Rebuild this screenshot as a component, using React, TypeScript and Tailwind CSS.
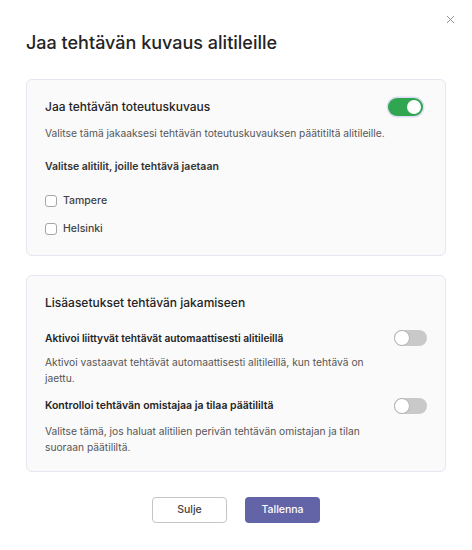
import React from "react";

function Toggle({ on }: { on: boolean }) {
  if (on) {
    return (
      <div className="flex h-[18px] w-[35px] items-center justify-end rounded-full bg-[#2fa64f] pr-[2px] shadow-[0_0_0_1.5px_#dcdcf4]">
        <div className="h-[14px] w-[14px] rounded-full bg-white" />
      </div>
    );
  }
  return (
    <div className="flex h-[16px] w-[33px] items-center rounded-full bg-[#c9c9c9]">
      <div className="h-[16px] w-[16px] rounded-full border border-[#b4b4b4] bg-white" />
    </div>
  );
}

function Checkbox({ label }: { label: string }) {
  return (
    <label className="flex items-center gap-[6px]">
      <span className="h-[12px] w-[12px] rounded-[3px] border border-[#a6a6a6] bg-white" />
      <span className="text-[10.5px] leading-[16px] font-medium text-[#424242]">{label}</span>
    </label>
  );
}

export default function App() {
  return (
    <div
      className="relative h-[550px] w-[472px] bg-white px-[26px] text-[#242424]"
      style={{ fontFamily: "Inter, 'Noto Sans', sans-serif" }}
    >
      {/* close button */}
      <button className="absolute right-[17px] top-[15px] text-[#8a8a8a]" aria-label="Sulje">
        <svg width="9" height="9" viewBox="0 0 10 10" fill="none" stroke="currentColor" strokeWidth="1">
          <path d="M1 1l8 8M9 1l-8 8" />
        </svg>
      </button>

      <h1 className="pt-[31px] text-[18px] leading-[24px] font-medium text-[#242424]">
        Jaa tehtävän kuvaus alitileille
      </h1>

      {/* Main share card */}
      <div className="mt-[24px] rounded-[6px] border border-[#e6e6f0] bg-[#fafafb] px-[18px] pt-[17px] pb-[18px]">
        <div className="flex items-center justify-between">
          <div className="text-[12px] leading-[20px] font-medium">Jaa tehtävän toteutuskuvaus</div>
          <div className="mr-[4px]">
            <Toggle on />
          </div>
        </div>
        <p className="mt-[8px] text-[10.25px] leading-[16px] text-[#555]">
          Valitse tämä jakaaksesi tehtävän toteutuskuvauksen päätitiltä alitileille.
        </p>
        <p className="mt-[18px] text-[10.5px] leading-[16px] font-semibold text-[#333]">
          Valitse alitilit, joille tehtävä jaetaan
        </p>
        <div className="mt-[18px] flex flex-col gap-[12px]">
          <Checkbox label="Tampere" />
          <Checkbox label="Helsinki" />
        </div>
      </div>

      {/* Extra settings card */}
      <div className="mt-[19px] rounded-[6px] border border-[#e6e6f0] bg-[#fafafb] px-[18px] pt-[17px] pb-[16px]">
        <div className="text-[12px] leading-[20px] font-medium">Lisäasetukset tehtävän jakamiseen</div>

        <div className="mt-[17px] flex items-center justify-between">
          <div className="text-[10.25px] leading-[16px] font-semibold">Aktivoi liittyvät tehtävät automaattisesti alitileillä</div>
          <Toggle on={false} />
        </div>
        <p className="mt-[8px] max-w-[330px] text-[10.25px] leading-[16px] text-[#555]">
          Aktivoi vastaavat tehtävät automaattisesti alitileillä, kun tehtävä on jaettu.
        </p>

        <div className="mt-[12px] flex items-center justify-between">
          <div className="text-[10.5px] leading-[16px] font-semibold">Kontrolloi tehtävän omistajaa ja tilaa päätililtä</div>
          <Toggle on={false} />
        </div>
        <p className="mt-[9px] max-w-[330px] text-[10.25px] leading-[16px] text-[#555]">
          Valitse tämä, jos haluat alitilien perivän tehtävän omistajan ja tilan suoraan päätililtä.
        </p>
      </div>

      {/* Actions */}
      <div className="mt-[25px] flex justify-center gap-[18px]">
        <button className="h-[26px] w-[75px] rounded-[4px] border border-[#c4c4c4] bg-white text-[10.5px] font-medium text-[#424242]">
          Sulje
        </button>
        <button className="h-[26px] w-[75px] rounded-[4px] bg-[#6264a7] text-[10.5px] font-medium text-white">
          Tallenna
        </button>
      </div>
    </div>
  );
}
